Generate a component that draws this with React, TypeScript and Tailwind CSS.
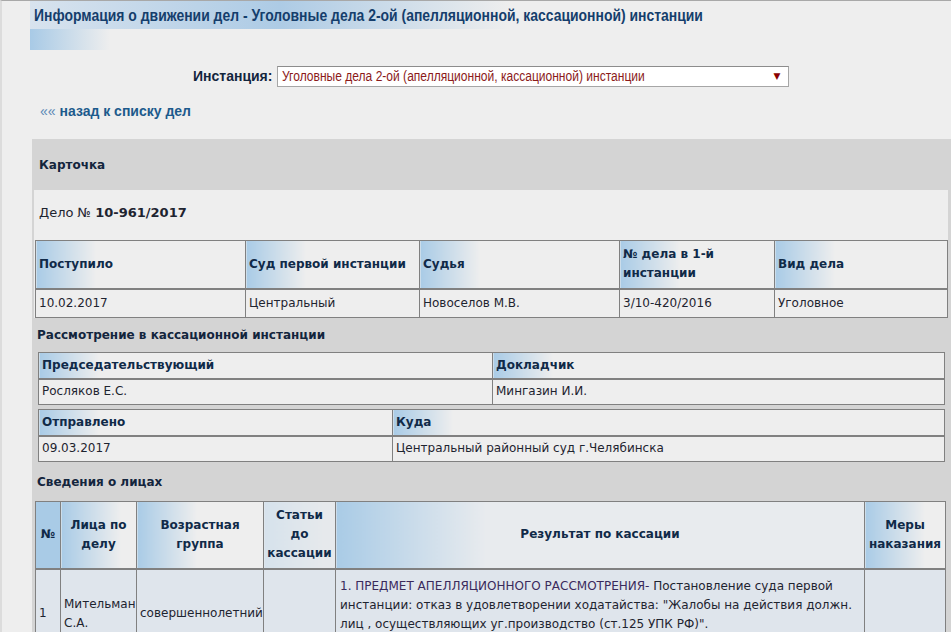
import React from 'react';

const sans = "font-['Liberation_Sans',Arial,sans-serif]";
const body = "font-['DejaVu_Sans',Verdana,sans-serif]";

// header cell background: blue fading into the page grey
const grad = 'bg-[linear-gradient(to_right,#a9cbe6,#eeeeee_60px)]';
const gradWide = 'bg-[linear-gradient(to_right,#a9cbe6,#e8ebee_150px)]';

const th = 'border border-[#808080] border-b-2 font-bold text-[#102a48] px-[3px] align-middle';
const td = 'border border-[#808080] px-[3px] align-middle text-[#1e2430]';

const CaseCard: React.FC = () => (
  <div className="ml-[2px] mr-[3px] bg-[#eeeeee] pl-[1px]">
    <div className="h-[50px] pb-[4px] flex items-center pl-[4px] text-[13px] text-[#1e2430]">
      <span>Дело №&nbsp;</span>
      <span className="font-bold">10-961/2017</span>
    </div>
    <table className="w-[912px] table-fixed border-collapse text-[12px] leading-[19px]">
      <colgroup>
        <col className="w-[210px]" />
        <col className="w-[174px]" />
        <col className="w-[200px]" />
        <col className="w-[155px]" />
        <col className="w-[173px]" />
      </colgroup>
      <thead>
        <tr className="h-[48px]">
          <th className={`${th} ${grad} text-left`}>Поступило</th>
          <th className={`${th} ${grad} text-left`}>Суд первой инстанции</th>
          <th className={`${th} ${grad} text-left`}>Судья</th>
          <th className={`${th} ${grad} text-left`}>№ дела в 1-й инстанции</th>
          <th className={`${th} ${grad} text-left`}>Вид дела</th>
        </tr>
      </thead>
      <tbody>
        <tr className="h-[29px]">
          <td className={td}>10.02.2017</td>
          <td className={td}>Центральный</td>
          <td className={td}>Новоселов М.В.</td>
          <td className={td}>3/10-420/2016</td>
          <td className={td}>Уголовное</td>
        </tr>
      </tbody>
    </table>
  </div>
);

const TwoCol: React.FC<{ cols: [number, number]; heads: [string, string]; vals: [string, string]; className?: string }> = ({
  cols,
  heads,
  vals,
  className = '',
}) => (
  <table className={`ml-[6px] w-[906px] table-fixed border-collapse text-[12px] leading-[19px] ${className}`}>
    <colgroup>
      <col style={{ width: cols[0] }} />
      <col style={{ width: cols[1] }} />
    </colgroup>
    <thead>
      <tr className="h-[26px]">
        <th className={`${th} ${grad} text-left`}>{heads[0]}</th>
        <th className={`${th} ${grad} text-left`}>{heads[1]}</th>
      </tr>
    </thead>
    <tbody>
      <tr className="h-[26px] bg-[#eeeeee]">
        <td className={td}>{vals[0]}</td>
        <td className={td}>{vals[1]}</td>
      </tr>
    </tbody>
  </table>
);

const Persons: React.FC = () => (
  <table className="ml-[3px] w-[910px] table-fixed border-collapse text-[12px] leading-[19px]">
    <colgroup>
      <col className="w-[25px]" />
      <col className="w-[76px]" />
      <col className="w-[127px]" />
      <col className="w-[72px]" />
      <col className="w-[529px]" />
      <col className="w-[81px]" />
    </colgroup>
    <thead>
      <tr className="h-[67px]">
        <th className={`${th} bg-[#a9cbe6] text-center px-[2px]`}>№</th>
        <th className={`${th} ${grad} text-center`}>Лица по делу</th>
        <th className={`${th} ${grad} text-center`}>Возрастная группа</th>
        <th className={`${th} bg-[linear-gradient(to_right,#d6e2ec,#e6e9ec_60px)] text-center`}>Статьи до кассации</th>
        <th className={`${th} ${gradWide} text-center`}>Результат по кассации</th>
        <th className={`${th} ${grad} text-center`}>Меры наказания</th>
      </tr>
    </thead>
    <tbody>
      <tr className="h-[90px] bg-[#dfe5ec]">
        <td className={td}>1</td>
        <td className={td}>Мительман С.А.</td>
        <td className={td}>совершеннолетний</td>
        <td className={td}></td>
        <td className={`${td} align-top pt-[7px] pl-[4px]`}>
          <span className="text-[#3a2a5c]">1. ПРЕДМЕТ АПЕЛЛЯЦИОННОГО РАССМОТРЕНИЯ-</span> Постановление суда первой
          <br />
          инстанции: отказ в удовлетворении ходатайства: "Жалобы на действия должн.
          <br />
          лиц , осуществляющих уг.производство (ст.125 УПК РФ)".
        </td>
        <td className={td}></td>
      </tr>
    </tbody>
  </table>
);

export default function App() {
  return (
    <div className={`h-[632px] w-[951px] overflow-hidden bg-[#eeeeee] border-l-2 border-l-[#dcdcdc] border-t border-t-[#a8a8a8] ${body}`}>
      {/* page title */}
      <div className="ml-[28px] h-[28px] flex items-center pl-[4px] bg-[linear-gradient(to_right,#d8e3ee_0px,#adcbe5_250px,#eeeeee_480px)]">
        <h1 className={`${sans} inline-block whitespace-nowrap origin-left scale-x-[0.82] font-bold text-[17px] text-[#153e6c] leading-none`}>
          Информация о движении дел - Уголовные дела 2-ой (апелляционной, кассационной) инстанции
        </h1>
      </div>
      <div className="ml-[28px] h-[21px] w-[80px] bg-[linear-gradient(to_right,#a8cae6,#eeeeee)]" />

      {/* instance selector */}
      <div className="mt-[16px] h-[21px] flex items-center pl-[191px] gap-[5px]">
        <span className={`${sans} font-bold text-[14px] text-[#13253d]`}>Инстанция:</span>
        <div className="w-[512px] h-[21px] bg-white border border-[#a6a6a6] border-t-[#8c8c8c] flex items-center justify-between pl-[4px] pr-[8px] overflow-hidden">
          <span className={`${sans} inline-block whitespace-nowrap origin-left scale-x-[0.86] text-[14px] text-[#8b1a1a]`}>
            Уголовные дела 2-ой (апелляционной, кассационной) инстанции
          </span>
          <span className="text-[9px] text-[#8b0000]">▼</span>
        </div>
      </div>

      {/* back link */}
      <div className="mt-[14px] h-[20px] flex items-center pl-[38px]">
        <a href="#" className={`${sans} font-bold text-[14px] text-[#1c5a8c]`}>
          <span className="text-[#5b88b5] font-normal">««</span> назад к списку дел
        </a>
      </div>

      {/* card panel */}
      <div className="mt-[18px] ml-[30px] bg-[#d4d4d4]">
        <div className="h-[51px] flex items-center pl-[7px] font-bold text-[12px] text-[#13253d]">Карточка</div>
        <CaseCard />

        <div className="h-[34px] pb-[1px] flex items-center pl-[5px] font-bold text-[12px] text-[#13253d]">
          Рассмотрение в кассационной инстанции
        </div>
        <TwoCol cols={[454, 452]} heads={['Председательствующий', 'Докладчик']} vals={['Росляков Е.С.', 'Мингазин И.И.']} />
        <TwoCol
          className="mt-[4px]"
          cols={[354, 552]}
          heads={['Отправлено', 'Куда']}
          vals={['09.03.2017', 'Центральный районный суд г.Челябинска']}
        />

        <div className="h-[39px] flex items-center pl-[5px] font-bold text-[12px] text-[#13253d]">Сведения о лицах</div>
        <Persons />
      </div>
    </div>
  );
}
